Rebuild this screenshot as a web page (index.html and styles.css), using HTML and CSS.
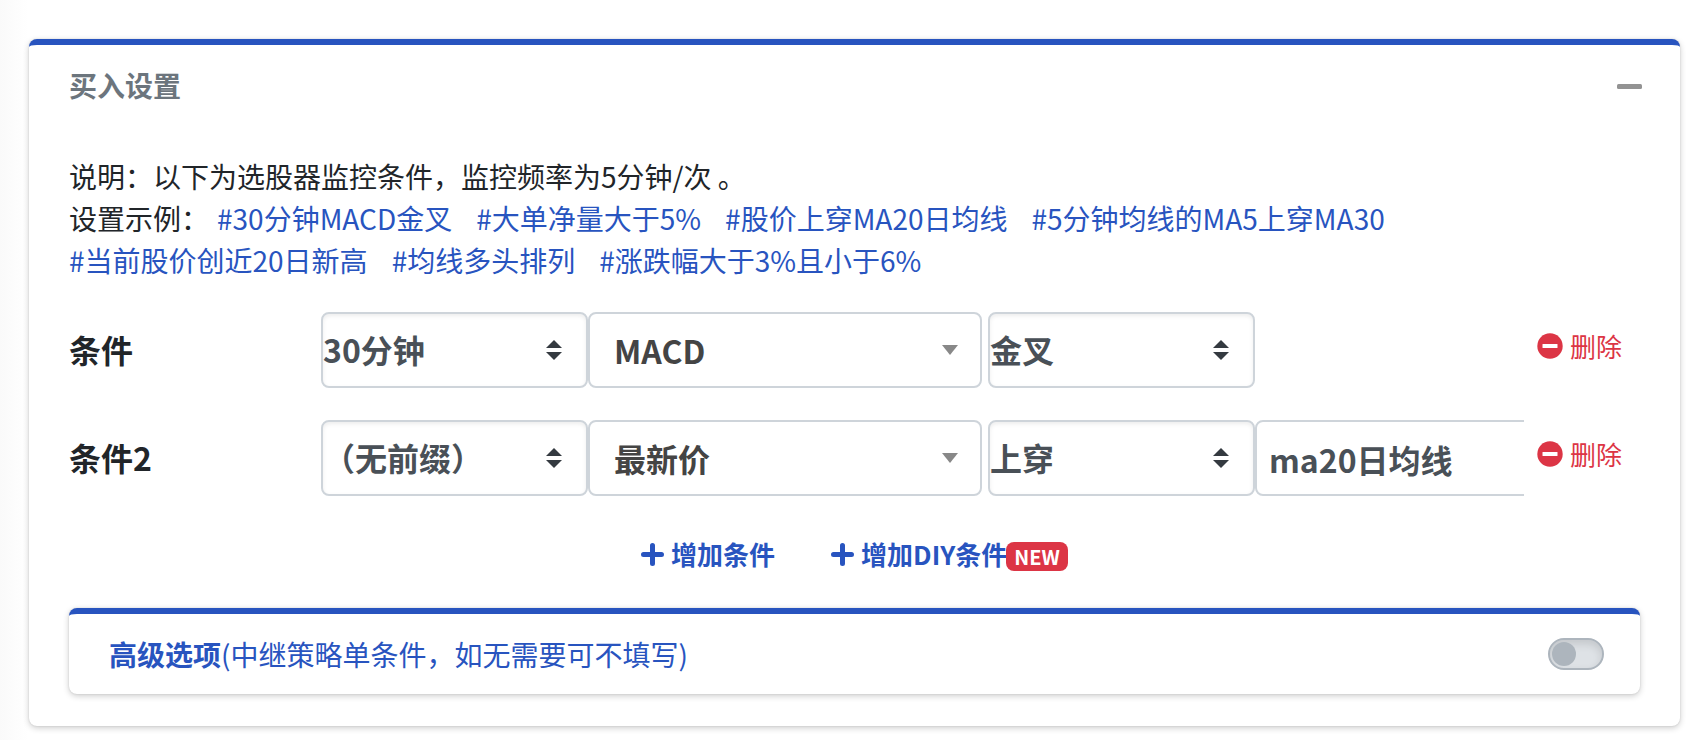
FILE: index.html
```html
<!DOCTYPE html>
<html lang="zh-CN">
<head>
<meta charset="utf-8">
<meta name="viewport" content="width=device-width, initial-scale=1">
<title>买入设置</title>
<link rel="stylesheet" href="styles.css">
</head>
<body>
<main class="card">
  <header class="card-header">
    <h1 class="card-title">买入设置</h1>
    <button class="collapse-btn" type="button" aria-label="折叠">
      <svg width="25" height="6" viewBox="0 0 25 6"><rect y="1" width="25" height="5" rx="1.5" fill="#939393"/></svg>
    </button>
  </header>
  <div class="card-body">
    <div class="intro">
      <p>说明：以下为选股器监控条件，监控频率为5分钟/次 。</p>
      <p><span class="intro-label">设置示例：</span><a class="example" href="#">#30分钟MACD金叉</a><a class="example" href="#">#大单净量大于5%</a><a class="example" href="#">#股价上穿MA20日均线</a><a class="example" href="#">#5分钟均线的MA5上穿MA30</a><a class="example" href="#">#当前股价创近20日新高</a><a class="example" href="#">#均线多头排列</a><a class="example" href="#">#涨跌幅大于3%且小于6%</a></p>
    </div>

    <div class="condition">
      <label class="condition-label" for="period1">条件</label>
      <div class="fields">
        <div class="field">
          <select class="control custom-select" id="period1"><option>30分钟</option></select>
          <svg class="sorter" viewBox="0 0 16 20"><path d="M0 8 8 0l8 8zM0 12h16l-8 8z"/></svg>
        </div>
        <div class="field field-wide">
          <select class="control combo" aria-label="指标"><option>MACD</option></select>
          <svg class="caret" viewBox="0 0 16 10"><path d="M0 0h16L8 10z"/></svg>
        </div>
        <div class="field">
          <select class="control custom-select" aria-label="关系"><option>金叉</option></select>
          <svg class="sorter" viewBox="0 0 16 20"><path d="M0 8 8 0l8 8zM0 12h16l-8 8z"/></svg>
        </div>
      </div>
      <button class="delete-btn" type="button">
        <svg width="26" height="26" viewBox="0 0 26 26"><circle cx="13" cy="13" r="12.7" fill="#dc3545"/><rect x="5.5" y="11" width="15" height="4" rx=".5" fill="#fff"/></svg>删除
      </button>
    </div>

    <div class="condition">
      <label class="condition-label" for="period2">条件2</label>
      <div class="fields">
        <div class="field">
          <select class="control custom-select" id="period2"><option>（无前缀）</option></select>
          <svg class="sorter" viewBox="0 0 16 20"><path d="M0 8 8 0l8 8zM0 12h16l-8 8z"/></svg>
        </div>
        <div class="field field-wide">
          <select class="control combo" aria-label="指标"><option>最新价</option></select>
          <svg class="caret" viewBox="0 0 16 10"><path d="M0 0h16L8 10z"/></svg>
        </div>
        <div class="field">
          <select class="control custom-select" aria-label="关系"><option>上穿</option></select>
          <svg class="sorter" viewBox="0 0 16 20"><path d="M0 8 8 0l8 8zM0 12h16l-8 8z"/></svg>
        </div>
        <div class="field field-value">
          <input class="control value" type="text" value="ma20日均线" aria-label="数值">
        </div>
      </div>
      <button class="delete-btn" type="button">
        <svg width="26" height="26" viewBox="0 0 26 26"><circle cx="13" cy="13" r="12.7" fill="#dc3545"/><rect x="5.5" y="11" width="15" height="4" rx=".5" fill="#fff"/></svg>删除
      </button>
    </div>

    <div class="actions">
      <button class="add-btn" type="button"><svg width="23" height="23" viewBox="0 0 23 23"><path d="M11.5 2.5v18M2.5 11.5h18" stroke="#2854bf" stroke-width="5" stroke-linecap="round"/></svg>增加条件</button>
      <button class="add-btn" type="button"><svg width="23" height="23" viewBox="0 0 23 23"><path d="M11.5 2.5v18M2.5 11.5h18" stroke="#2854bf" stroke-width="5" stroke-linecap="round"/></svg><span>增加DIY条件</span><span class="badge">NEW</span></button>
    </div>

    <section class="advanced">
      <label class="advanced-label" for="advanced"><strong>高级选项</strong>(中继策略单条件，如无需要可不填写)</label>
      <input class="switch" type="checkbox" role="switch" id="advanced">
    </section>
  </div>
</main>
</body>
</html>
```
FILE: styles.css
```css
* {
  box-sizing: border-box;
}

body {
  margin: 0;
  padding: 39px 20px 15px 29px;
  background: linear-gradient(to right, #fafafa, #fff 28px);
  color: #212529;
  font-family: "Noto Sans CJK SC", "Noto Sans", sans-serif;
  font-size: 28px;
  line-height: 42px;
}

.card,
.advanced {
  background: #fff;
  border-top: 6px solid #2854bf;
  border-radius: 8px;
  box-shadow: 0 0 2px rgba(0, 0, 0, .13), 0 2px 6px rgba(0, 0, 0, .2);
}

.card-header {
  display: flex;
  align-items: center;
  justify-content: space-between;
  padding: 19px 38px 20px 40px;
}

.card-title {
  margin: 0;
  color: #6c757d;
  font-size: 28px;
  font-weight: 700;
}

button {
  display: inline-flex;
  align-items: center;
  padding: 0;
  border: 0;
  background: none;
  font: inherit;
  cursor: pointer;
}

.collapse-btn {
  padding-top: 2px;
}

.card-body {
  padding: 29px 40px 32px;
}

.intro p {
  margin: 0;
}

.intro-label {
  margin-right: 8px;
}

.example {
  display: inline-block;
  margin-right: 24px;
  color: #2854bf;
  text-decoration: none;
}

.condition {
  display: flex;
  align-items: center;
  margin-top: 32px;
}

.intro + .condition {
  margin-top: 31px;
}

.condition-label {
  flex: 0 0 252px;
  padding-bottom: 2px;
  font-size: 32px;
  font-weight: 700;
}

.fields {
  display: flex;
  flex: 1;
  min-width: 0;
  overflow: hidden;
}

.field {
  position: relative;
  flex: 0 0 267px;
}

.field-wide {
  flex-basis: 394px;
  margin-right: 6px;
}

.field-value {
  flex-basis: 394px;
}

.control {
  display: block;
  width: 100%;
  height: 76px;
  border: 2px solid #ced4da;
  border-radius: 8px;
  background: #fff;
  color: #495057;
  font: 700 32px/48px "Noto Sans CJK SC", "Noto Sans", sans-serif;
  appearance: none;
}

.custom-select {
  padding: 0 48px 2px 0;
  box-shadow: inset 0 2px 4px rgba(0, 0, 0, .075);
}

.combo {
  padding: 0 48px 0 24px;
  color: #444;
}

.value {
  padding: 2px 12px 0;
}

.sorter,
.caret {
  position: absolute;
  top: 28px;
  right: 26px;
  width: 16px;
  height: 20px;
  fill: #343a40;
  pointer-events: none;
}

.caret {
  top: 33px;
  right: 24px;
  height: 10px;
  fill: #888;
}

.delete-btn {
  flex: 0 0 116px;
  gap: 7px;
  padding: 0 0 8px 13px;
  color: #dc3545;
  font-size: 26px;
  white-space: nowrap;
}

.actions {
  display: flex;
  justify-content: center;
  gap: 56px;
  margin-top: 37px;
}

.add-btn {
  gap: 7px;
  color: #2854bf;
  font-size: 26px;
  font-weight: 700;
}

.badge {
  margin: 4px 0 0 -8px;
  padding: 0 8px;
  border-radius: 8px;
  background: #dc3545;
  color: #fff;
  font-size: 20px;
  line-height: 29px;
}

.advanced {
  display: flex;
  align-items: center;
  justify-content: space-between;
  margin-top: 33px;
  padding: 19px 36px 19px 40px;
  color: #2854bf;
}

.switch {
  display: flex;
  align-items: center;
  width: 56px;
  height: 32px;
  margin: 0;
  padding: 0 2px;
  border: 2px solid #adb5bd;
  border-radius: 16px;
  background: #dee2e6;
  box-shadow: inset 0 4px 8px rgba(0, 0, 0, .12);
  appearance: none;
}

.switch::before {
  content: "";
  width: 24px;
  height: 24px;
  border-radius: 50%;
  background: #adb5bd;
}

.switch:checked {
  justify-content: flex-end;
  background: #2854bf;
}
```
